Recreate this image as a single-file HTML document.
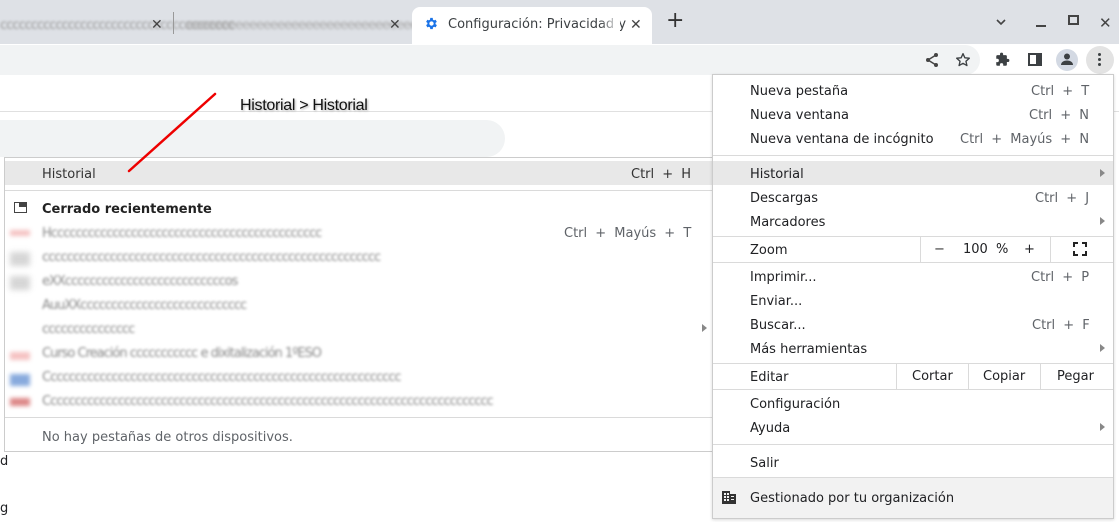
<!DOCTYPE html>
<html><head><meta charset="utf-8"><style>
*{margin:0;padding:0;box-sizing:border-box}
body{width:1119px;height:522px;overflow:hidden;background:#fff;font-family:"DejaVu Sans","Liberation Sans",sans-serif;font-size:13px;color:#202124;position:relative}
.a{position:absolute}
.t{position:absolute;white-space:nowrap;line-height:16px;margin-top:4px}
.sc{color:#5f6368;word-spacing:4px}
.sep{position:absolute;height:1px;background:#dadada}
.blur{filter:blur(1.3px);color:#888;letter-spacing:-1px}
.ar{position:absolute;width:0;height:0;border-left:5px solid #888;border-top:4px solid transparent;border-bottom:4px solid transparent}
</style></head><body>
<!-- tab strip -->
<div class="a" style="left:0;top:0;width:1119px;height:44px;background:#dee1e6"></div>
<div class="t blur" style="left:0;top:14px;color:#999">cccccccccccccccccccccccccccccccccccccc</div>
<div class="t" style="left:151px;top:13px;color:#444;font-size:14px">✕</div>
<div class="a" style="left:173px;top:12px;width:1px;height:22px;background:#999"></div>
<div class="t blur" style="left:186px;top:14px;color:#aaa">eeeeeeeeeeeeeeeeeeeeeeeeeeeeeeeeeeeeeeeeeeeeeeeee</div>
<div class="t" style="left:389px;top:13px;color:#444;font-size:14px">✕</div>
<div class="a" style="left:412px;top:7px;width:240px;height:38px;background:#fff;border-radius:8px 8px 0 0"></div>
<svg class="a" style="left:424px;top:16px" width="15" height="15" viewBox="0 0 24 24"><path fill="#1a73e8" d="M19.4 13a7.5 7.5 0 000-2l2.1-1.6-2-3.5-2.5 1a7.3 7.3 0 00-1.7-1L15 3h-4l-.4 2.9a7.3 7.3 0 00-1.7 1l-2.5-1-2 3.5L6.5 11a7.5 7.5 0 000 2l-2.1 1.6 2 3.5 2.5-1c.5.4 1.1.7 1.7 1L11 21h4l.4-2.9c.6-.3 1.2-.6 1.7-1l2.5 1 2-3.5zM13 15.5a3.5 3.5 0 110-7 3.5 3.5 0 010 7z" transform="translate(-1 0)"/></svg>
<div class="t" style="left:448px;top:13px;color:#3c4043">Configuración: Privacidad y</div>
<div class="a" style="left:600px;top:10px;width:20px;height:28px;background:linear-gradient(90deg,rgba(255,255,255,0),#fff)"></div>
<div class="t" style="left:630px;top:13px;color:#444;font-size:14px">✕</div>
<div class="t" style="left:666px;top:9px;color:#333;font-size:22px">+</div>
<svg class="a" style="left:996px;top:19px" width="10" height="7"><path d="M1 1l4 4 4-4" stroke="#444" stroke-width="1.6" fill="none"/></svg>
<div class="a" style="left:1036px;top:25px;width:10px;height:2px;background:#444"></div>
<div class="a" style="left:1068px;top:15px;width:11px;height:10px;border:2px solid #444"></div>
<div class="t" style="left:1099px;top:11px;color:#444;font-size:15px">✕</div>
<!-- toolbar -->
<div class="a" style="left:0;top:45px;width:980px;height:30px;background:#f1f3f4;border-radius:0 15px 15px 0"></div>
<svg class="a" style="left:924px;top:52px" width="16" height="16" viewBox="0 0 16 16"><g fill="#444"><circle cx="12" cy="3" r="2"/><circle cx="4" cy="8" r="2"/><circle cx="12" cy="13" r="2"/></g><path d="M12 3L4 8l8 5" stroke="#444" stroke-width="1.5" fill="none"/></svg>
<svg class="a" style="left:955px;top:52px" width="16" height="16" viewBox="0 0 24 24"><path d="M12 2.5l2.8 6.2 6.7.6-5.1 4.5 1.5 6.6L12 17l-5.9 3.4 1.5-6.6-5.1-4.5 6.7-.6z" stroke="#3c4043" stroke-width="2" fill="none" stroke-linejoin="round"/></svg>
<svg class="a" style="left:995px;top:52px" width="15" height="15" viewBox="0 0 24 24"><path fill="#3c4043" d="M20.5 11H19V7a2 2 0 00-2-2h-4V3.5a2.5 2.5 0 00-5 0V5H4a2 2 0 00-2 2v3.8h1.5a2.7 2.7 0 010 5.4H2V20a2 2 0 002 2h3.8v-1.5a2.7 2.7 0 015.4 0V22H17a2 2 0 002-2v-4h1.5a2.5 2.5 0 000-5z"/></svg>
<div class="a" style="left:1028px;top:53px;width:14px;height:13px;border:2px solid #3c4043;border-right-width:6px"></div>
<div class="a" style="left:1056px;top:49px;width:22px;height:22px;border-radius:50%;background:#d3d9e3"></div>
<svg class="a" style="left:1060px;top:52px" width="14" height="14" viewBox="0 0 14 14"><circle cx="7" cy="4.5" r="3" fill="#3c4043"/><path d="M1 13c0-3 3-4.5 6-4.5s6 1.5 6 4.5z" fill="#3c4043"/></svg>
<div class="a" style="left:1086px;top:46px;width:28px;height:28px;border-radius:50%;background:#e3e3e3"></div>
<div class="a" style="left:1098px;top:53px;width:3px;height:3px;border-radius:50%;background:#3c4043;box-shadow:0 5px #3c4043,0 10px #3c4043"></div>
<!-- content -->
<div class="a" style="left:0;top:111px;width:1119px;height:1px;background:#e0e0e0"></div>
<div class="a" style="left:0;top:120px;width:505px;height:37px;background:#f1f3f4;border-radius:0 19px 19px 0"></div>
<div class="t" style="left:240px;top:94px;font-family:'Liberation Sans',sans-serif;font-size:16px;color:#111;text-shadow:1px 1px 2px #aaa;letter-spacing:-0.3px">Historial &gt; Historial</div>
<div class="t" style="left:0;top:450px">d</div>
<div class="t" style="left:0;top:497px">g</div>
<!-- submenu -->
<div class="a" style="left:4px;top:157px;width:711px;height:295px;background:#fff;border:1px solid #ccc"></div>
<div class="a" style="left:5px;top:161px;width:709px;height:24px;background:#e8e8e8"></div>
<div class="t" style="left:42px;top:163px;color:#333">Historial</div>
<div class="t sc" style="left:631px;top:163px;color:#333">Ctrl + H</div>
<div class="sep" style="left:5px;top:190px;width:709px"></div>
<div class="a" style="left:14px;top:202px;width:13px;height:11px;border:1.5px solid #444"></div>
<div class="a" style="left:19px;top:202px;width:8px;height:5px;background:#444"></div>
<div class="t" style="left:42px;top:198px;font-weight:bold;color:#222">Cerrado recientemente</div>
<div class="t blur" style="left:42px;top:222px">Hcccccccccccccccccccccccccccccccccccccccccccc</div>
<div class="t sc" style="left:564px;top:222px">Ctrl + Mayús + T</div>
<div class="t blur" style="left:42px;top:246px">ccccccccccccccccccccccccccccccccccccccccccccccccccccccc</div>
<div class="t blur" style="left:42px;top:270px">eXXccccccccccccccccccccccccccos</div>
<div class="t blur" style="left:42px;top:294px">AuuXXccccccccccccccccccccccccccc</div>
<div class="t blur" style="left:42px;top:318px">ccccccccccccccc</div>
<div class="ar" style="left:702px;top:324px"></div>
<div class="t blur" style="left:42px;top:342px">Curso Creación ccccccccccc e dixitalización 1ºESO</div>
<div class="t blur" style="left:42px;top:366px">Cccccccccccccccccccccccccccccccccccccccccccccccccccccccccc</div>
<div class="t blur" style="left:42px;top:390px">Ccccccccccccccccccccccccccccccccccccccccccccccccccccccccccccccccccccccccc</div>
<div class="a" style="left:10px;top:398px;width:20px;height:8px;background:#d88;filter:blur(2px)"></div>
<div class="a" style="left:10px;top:374px;width:20px;height:12px;background:#8ad;filter:blur(2px)"></div>
<div class="a" style="left:10px;top:230px;width:20px;height:6px;background:#e99;filter:blur(2px);opacity:.6"></div>
<div class="a" style="left:10px;top:352px;width:20px;height:8px;background:#e99;filter:blur(2px);opacity:.6"></div>
<div class="a" style="left:10px;top:252px;width:20px;height:14px;background:#bbb;filter:blur(3px);opacity:.6"></div>
<div class="a" style="left:10px;top:276px;width:20px;height:14px;background:#bbb;filter:blur(3px);opacity:.6"></div>
<div class="sep" style="left:5px;top:417px;width:709px"></div>
<div class="t" style="left:42px;top:426px;color:#5f6368">No hay pestañas de otros dispositivos.</div>
<!-- red arrow line -->
<svg class="a" style="left:120px;top:85px" width="110" height="95"><line x1="95" y1="9" x2="9" y2="86" stroke="#e00" stroke-width="2.5" stroke-linecap="round"/></svg>
<!-- main menu -->
<div class="a" style="left:712px;top:74px;width:402px;height:445px;background:#fff;border:1px solid #ccc;box-shadow:0 1px 3px rgba(0,0,0,.15)"></div>
<div class="t" style="left:750px;top:80px">Nueva pestaña</div><div class="t sc" style="left:1031px;top:80px">Ctrl + T</div>
<div class="t" style="left:750px;top:104px">Nueva ventana</div><div class="t sc" style="left:1029px;top:104px">Ctrl + N</div>
<div class="t" style="left:750px;top:128px">Nueva ventana de incógnito</div><div class="t sc" style="left:960px;top:128px">Ctrl + Mayús + N</div>
<div class="sep" style="left:713px;top:155px;width:400px"></div>
<div class="a" style="left:713px;top:161px;width:400px;height:24px;background:#e8e8e8"></div>
<div class="t" style="left:750px;top:163px">Historial</div><div class="ar" style="left:1100px;top:169px"></div>
<div class="t" style="left:750px;top:187px">Descargas</div><div class="t sc" style="left:1035px;top:187px">Ctrl + J</div>
<div class="t" style="left:750px;top:211px">Marcadores</div><div class="ar" style="left:1100px;top:217px"></div>
<div class="sep" style="left:713px;top:236px;width:400px"></div>
<div class="t" style="left:750px;top:239px">Zoom</div>
<div class="a" style="left:920px;top:237px;width:1px;height:25px;background:#dadada"></div>
<div class="a" style="left:1050px;top:237px;width:1px;height:25px;background:#dadada"></div>
<div class="t" style="left:934px;top:238px;color:#333">−</div>
<div class="t" style="left:963px;top:238px;word-spacing:4px">100 %</div>
<div class="t" style="left:1024px;top:238px">+</div>
<svg class="a" style="left:1073px;top:242px" width="14" height="14" viewBox="0 0 14 14"><path d="M1 5V1h4M9 1h4v4M13 9v4H9M5 13H1V9" stroke="#222" stroke-width="2" fill="none"/></svg>
<div class="sep" style="left:713px;top:262px;width:400px"></div>
<div class="t" style="left:750px;top:266px">Imprimir...</div><div class="t sc" style="left:1031px;top:266px">Ctrl + P</div>
<div class="t" style="left:750px;top:290px">Enviar...</div>
<div class="t" style="left:750px;top:314px">Buscar...</div><div class="t sc" style="left:1032px;top:314px">Ctrl + F</div>
<div class="t" style="left:750px;top:338px">Más herramientas</div><div class="ar" style="left:1100px;top:344px"></div>
<div class="sep" style="left:713px;top:363px;width:400px"></div>
<div class="t" style="left:750px;top:366px">Editar</div>
<div class="a" style="left:896px;top:364px;width:1px;height:25px;background:#dadada"></div>
<div class="a" style="left:968px;top:364px;width:1px;height:25px;background:#dadada"></div>
<div class="a" style="left:1040px;top:364px;width:1px;height:25px;background:#dadada"></div>
<div class="t" style="left:912px;top:365px">Cortar</div>
<div class="t" style="left:983px;top:365px">Copiar</div>
<div class="t" style="left:1057px;top:365px">Pegar</div>
<div class="sep" style="left:713px;top:389px;width:400px"></div>
<div class="t" style="left:750px;top:393px">Configuración</div>
<div class="t" style="left:750px;top:417px">Ayuda</div><div class="ar" style="left:1100px;top:423px"></div>
<div class="sep" style="left:713px;top:444px;width:400px"></div>
<div class="t" style="left:750px;top:452px">Salir</div>
<div class="sep" style="left:713px;top:477px;width:400px"></div>
<div class="a" style="left:713px;top:478px;width:400px;height:40px;background:#f2f2f2"></div>
<svg class="a" style="left:722px;top:491px" width="14" height="13" viewBox="0 0 14 13"><path fill="#333" d="M0 0h8v3h6v10H0zM2 2v2h2V2zm3 0v2h2V2zM2 5v2h2V5zm3 0v2h2V5zM2 8v2h2V8zm3 0v2h2V8zm4-3v1h3V5zm0 3v1h3V8z"/></svg>
<div class="t" style="left:750px;top:487px">Gestionado por tu organización</div>
</body></html>
